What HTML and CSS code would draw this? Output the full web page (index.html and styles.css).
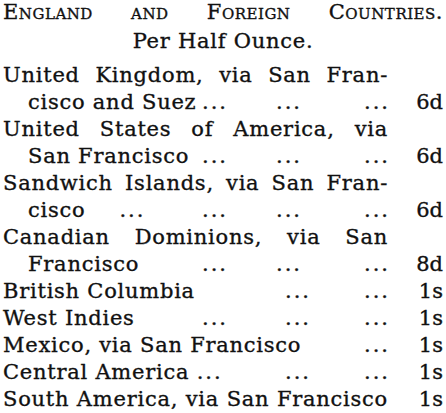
FILE: index.html
```html
<!DOCTYPE html>
<html>
<head>
<meta charset="utf-8">
<link rel="stylesheet" href="styles.css">
</head>
<body>
<div class="page">
  <div class="title">England and Foreign Countries.</div>
  <div class="sub">Per Half Ounce.</div>
  <div class="list">
    <div class="row"><span class="t full">United Kingdom, via San Fran-</span></div>
    <div class="row"><span class="t ind">cisco and Suez</span><span class="d a">...</span><span class="d b">...</span><span class="d c">...</span><span class="p">6d</span></div>

    <div class="row"><span class="t full">United States of America, via</span></div>
    <div class="row"><span class="t ind">San Francisco</span><span class="d a">...</span><span class="d b">...</span><span class="d c">...</span><span class="p">6d</span></div>

    <div class="row"><span class="t full">Sandwich Islands, via San Fran-</span></div>
    <div class="row"><span class="t ind">cisco<span class="lead">...</span></span><span class="d a">...</span><span class="d b">...</span><span class="d c">...</span><span class="p">6d</span></div>

    <div class="row"><span class="t full">Canadian Dominions, via San</span></div>
    <div class="row"><span class="t ind">Francisco</span><span class="d a">...</span><span class="d b">...</span><span class="d c">...</span><span class="p">8d</span></div>

    <div class="row"><span class="t w3">British Columbia</span><span class="d b2">...</span><span class="d c">...</span><span class="p">1s</span></div>
    <div class="row"><span class="t">West Indies</span><span class="d a">...</span><span class="d b2">...</span><span class="d c">...</span><span class="p">1s</span></div>
    <div class="row"><span class="t w5">Mexico, via San Francisco</span><span class="d c">...</span><span class="p">1s</span></div>
    <div class="row"><span class="t">Central America <span class="tail">...</span></span><span class="d b2">...</span><span class="d c">...</span><span class="p">1s</span></div>
    <div class="row"><span class="t full">South America, via San Francisco</span><span class="p">1s</span></div>
  </div>
</div>
</body>
</html>
```
FILE: styles.css
```css
html, body {
  margin: 0;
  padding: 0;
  background: #ffffff;
}

body {
  font-family: "DejaVu Serif", "Liberation Serif", serif;
  color: #111111;
  font-size: 21px;
  letter-spacing: 0.75px;
  -webkit-text-stroke: 0.35px #111111;
}

.page {
  width: 440px;
  padding: 0 3px;
}

.title {
  font-variant: small-caps;
  font-size: 21px;
  letter-spacing: 0.5px;
  line-height: 24px;
  text-align: justify;
  text-align-last: justify;
}

.sub {
  margin-top: 3px;
  line-height: 28px;
  text-align: center;
}

.list {
  margin-top: 7px;
}

.row {
  display: grid;
  grid-template-columns: 194px 23px 57px 23px 65px 23px 1fr;
  line-height: 27px;
  height: 27px;
  white-space: nowrap;
}

.t {
  grid-column: 1 / 2;
}

.t.full {
  grid-column: 1 / 7;
  text-align: justify;
  text-align-last: justify;
}

.t.ind {
  padding-left: 25px;
}

.t.w3 {
  grid-column: 1 / 4;
}

.t.w5 {
  grid-column: 1 / 6;
}

.lead {
  margin-left: 34px;
  letter-spacing: 2px;
}

.tail {
  letter-spacing: 2px;
}

.d {
  letter-spacing: 2px;
  justify-self: end;
  margin-right: -2px;
}

.d.a { grid-column: 2 / 4; justify-self: start; margin-left: 5px; }
.d.b { grid-column: 4 / 5; }
.d.b2 { grid-column: 4 / 6; justify-self: start; padding-left: 8px; }
.d.c { grid-column: 6 / 7; }

.p {
  grid-column: 7 / 8;
  justify-self: end;
  letter-spacing: 0;
}
```
